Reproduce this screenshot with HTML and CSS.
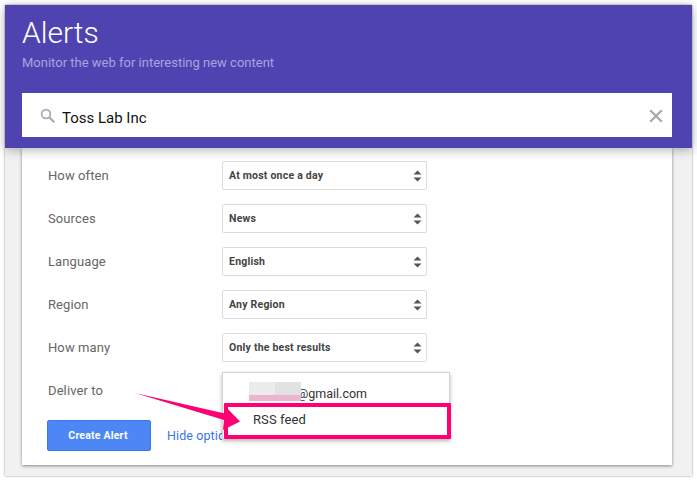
FILE: index.html
```html
<!DOCTYPE html>
<html lang="en">
<head>
<meta charset="utf-8">
<title>Alerts</title>
<link rel="stylesheet" href="styles.css">
</head>
<body>
<div class="window">
  <header class="header">
    <h1 class="title">Alerts</h1>
    <p class="subtitle">Monitor the web for interesting new content</p>
    <div class="search">
      <svg class="search-icon" width="16" height="16" viewBox="0 0 16 16"><circle cx="6" cy="6" r="4.4" fill="none" stroke="#aaa" stroke-width="1.7"/><path d="M9.3 9.3L14.3 14.3" stroke="#aaa" stroke-width="2.2" fill="none"/></svg>
      <span class="query">Toss Lab Inc</span>
      <svg class="close-icon" width="14" height="14" viewBox="0 0 14 14"><path d="M1.2 1.2L12.8 12.8M12.8 1.2L1.2 12.8" stroke="#a8a8a8" stroke-width="2.2" fill="none"/></svg>
    </div>
  </header>
  <main class="card">
    <div class="row"><span class="label">How often</span><div class="select"><span>At most once a day</span><svg class="updown" width="9" height="12" viewBox="0 0 9 12"><path d="M4.5 0.5L8.5 4.5H0.5ZM0.5 7.5H8.5L4.5 11.5Z" fill="#555"/></svg></div></div>
    <div class="row"><span class="label">Sources</span><div class="select"><span>News</span><svg class="updown" width="9" height="12" viewBox="0 0 9 12"><path d="M4.5 0.5L8.5 4.5H0.5ZM0.5 7.5H8.5L4.5 11.5Z" fill="#555"/></svg></div></div>
    <div class="row"><span class="label">Language</span><div class="select"><span>English</span><svg class="updown" width="9" height="12" viewBox="0 0 9 12"><path d="M4.5 0.5L8.5 4.5H0.5ZM0.5 7.5H8.5L4.5 11.5Z" fill="#555"/></svg></div></div>
    <div class="row"><span class="label">Region</span><div class="select"><span>Any Region</span><svg class="updown" width="9" height="12" viewBox="0 0 9 12"><path d="M4.5 0.5L8.5 4.5H0.5ZM0.5 7.5H8.5L4.5 11.5Z" fill="#555"/></svg></div></div>
    <div class="row"><span class="label">How many</span><div class="select"><span>Only the best results</span><svg class="updown" width="9" height="12" viewBox="0 0 9 12"><path d="M4.5 0.5L8.5 4.5H0.5ZM0.5 7.5H8.5L4.5 11.5Z" fill="#555"/></svg></div></div>
    <div class="row deliver"><span class="label">Deliver to</span></div>
    <div class="actions">
      <button class="create">Create Alert</button>
      <a class="hide-link">Hide options</a>
    </div>
    <div class="menu">
      <div class="menu-item email"><span class="mask"><span class="mask-a"></span><span class="mask-b"></span></span><span class="email-text">@gmail.com</span></div>
      <div class="menu-item rss">RSS feed</div>
    </div>
    <svg class="arrow" width="110" height="50" viewBox="0 0 110 50"><path d="M0 0L92 21L90 13L105 28.500L88 37L89 27Z" fill="#ff0072"/></svg>
  </main>
</div>
</body>
</html>
```
FILE: styles.css
```css
* { box-sizing: border-box; }
html, body { margin: 0; padding: 0; }
body {
  width: 697px;
  height: 481px;
  background: #fff;
  padding: 5px;
  overflow: hidden;
  font-family: Roboto, "Liberation Sans", sans-serif;
}
.window {
  width: 687px;
  height: 471px;
  background: #f1f1f1;
  box-shadow: 0 0 2px rgba(0,0,0,.45);
  position: relative;
}
.header {
  position: relative;
  z-index: 2;
  height: 143px;
  background: #4f43b2;
  padding: 13px 17px 0;
  box-shadow: 0 2px 10px rgba(0,0,0,.3);
}
.title {
  margin: 0;
  height: 30px;
  font-size: 30px;
  line-height: 30px;
  font-weight: 300;
  color: #fff;
}
.subtitle {
  margin: 5px 0 0;
  height: 20px;
  font-size: 13px;
  line-height: 20px;
  color: #a9a3dc;
}
.search {
  margin-top: 20px;
  height: 44px;
  width: 650px;
  background: #fff;
  display: flex;
  align-items: center;
  padding: 0 9px 0 18px;
}
.search-icon { margin: 2px 6px 0 0; }
.query { font-size: 15px; color: #111; margin-top: 5px; flex: 1; }
.close-icon { margin-top: 2px; }
.card {
  position: relative;
  margin: 0 20px 0 17px;
  width: 650px;
  height: 317px;
  background: #fff;
  box-shadow: 0 1px 3px rgba(0,0,0,.45);
  padding: 13px 0 0 26px;
}
.row {
  display: flex;
  align-items: center;
  height: 29px;
  margin-bottom: 14px;
}
.label {
  width: 174px;
  font-size: 13px;
  color: #666;
  letter-spacing: .1px;
}
.select {
  width: 205px;
  height: 29px;
  background: #fff;
  border: 1px solid #dcdcdc;
  border-radius: 2px;
  display: flex;
  align-items: center;
  justify-content: space-between;
  padding: 0 4px 0 6px;
  font-size: 10.500px;
  font-weight: 700;
  letter-spacing: .22px;
  color: #444;
}
.deliver { height: 29px; margin-bottom: 0; }
.actions {
  display: flex;
  align-items: center;
  margin: 15px 0 0 -1px;
}
.create {
  width: 104px;
  height: 31px;
  border: 1px solid #3d76e8;
  border-radius: 2px;
  background: #4d87f6;
  color: #fff;
  font: 700 10.500px Roboto, "Liberation Sans", sans-serif;
  letter-spacing: .2px;
  padding: 0 2px 0 0;
}
.hide-link {
  margin: -1px 0 0 16px;
  width: 55px;
  overflow: hidden;
  white-space: nowrap;
  font-size: 12.500px;
  color: #3b74e6;
  letter-spacing: .1px;
}
.menu {
  position: absolute;
  z-index: 3;
  left: 200px;
  top: 224px;
  width: 228px;
  height: 67px;
  background: #fff;
  border: 1px solid #d4d4d4;
  box-shadow: 0 2px 4px rgba(0,0,0,.3);
}
.menu-item {
  font-size: 13px;
  color: #333;
  letter-spacing: .1px;
}
.email {
  display: flex;
  align-items: flex-start;
  height: 30px;
  padding: 9px 0 0 26px;
}
.mask {
  position: relative;
  z-index: 1;
  display: flex;
  flex-wrap: wrap;
  width: 52px;
  height: 19px;
  background: #ecb4cf;
  align-content: flex-start;
}
.mask-a, .mask-b { height: 13px; width: 26px; background: #ebebeb; }
.mask-b { background: #e2e2e2; }
.email-text { line-height: 17px; margin: 3px 0 0 -4px; font-size: 12.500px; letter-spacing: 0; }
.rss {
  position: absolute;
  left: 1px;
  top: 30px;
  width: 227px;
  height: 36px;
  border: 4px solid #ff0072;
  border-radius: 1px;
  padding-left: 25px;
  line-height: 26px;
}
.arrow {
  position: absolute;
  z-index: 4;
  left: 113px;
  top: 245px;
}
```
